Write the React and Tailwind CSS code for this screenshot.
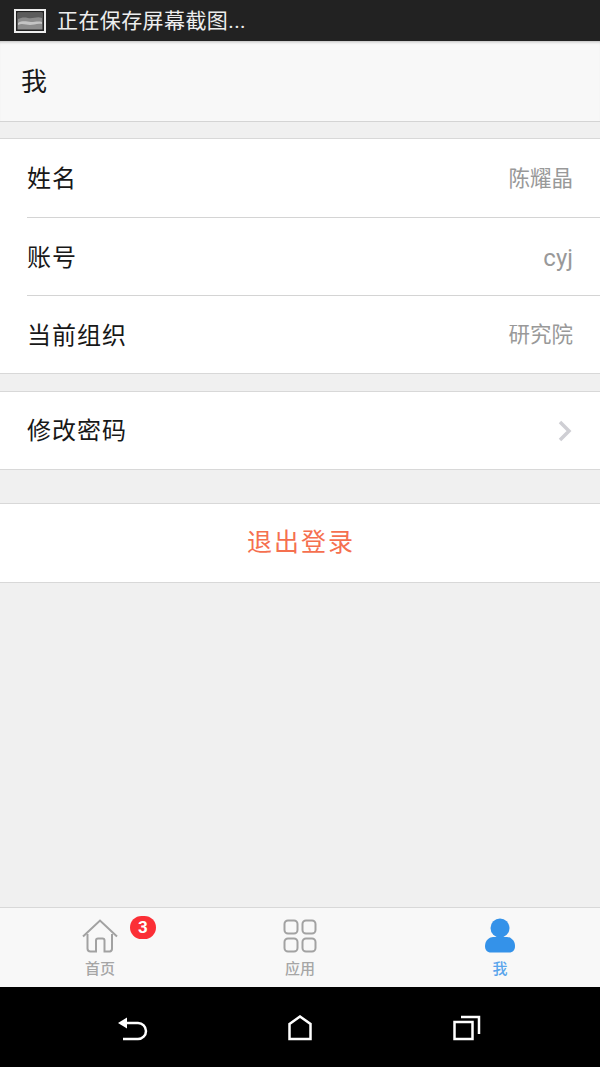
import React from "react";

const font = "font-['Roboto','Noto_Sans_CJK_SC',sans-serif]";

function InfoRow({ label, value, last, height, valueClass = "text-[21.5px] pt-[2px]" }) {
  return (
    <div className="pl-[27px]">
      <div className={`flex items-center justify-between pr-[27px] ${height} ${last ? "" : "border-b border-[#d4d4d4]"}`}>
        <span className="text-[24px] tracking-[1px] text-[#181818] pt-[2px]">{label}</span>
        <span className={`${valueClass} text-[#999999]`}>{value}</span>
      </div>
    </div>
  );
}

function ScreenshotIcon() {
  return (
    <svg width="32" height="24" viewBox="0 0 32 24" className="shrink-0">
      <rect x="1" y="1" width="30" height="22" fill="#222222" stroke="#eeeeee" strokeWidth="2" />
      <rect x="3.500" y="3.500" width="25" height="17" fill="#8c8c8c" />
      <path d="M4 4h24v5c-5-2-9 1-14 0s-7 0-10 1z" fill="#5c5c5c" />
      <path d="M4 14c5-3 9-1 13-1s7-1 11 0v2c-5-1-8 1-12 1s-8-2-12 0z" fill="#c4c4c4" />
    </svg>
  );
}

function HomeIcon() {
  return (
    <svg width="36" height="34" viewBox="0 0 36 34" fill="none" stroke="#a2a2a2" strokeWidth="2">
      <path d="M1 17.500 18 1.500l17 16" />
      <path d="M5.500 15v14.500a3 3 0 0 0 3 3h5.500V21.500a2 2 0 0 1 2-2h4.500a2 2 0 0 1 2 2v11h5.500a3 3 0 0 0 2-3V15" />
    </svg>
  );
}

function AppsIcon() {
  return (
    <svg width="34" height="34" viewBox="0 0 34 34" fill="none" stroke="#a2a2a2" strokeWidth="2">
      <rect x="1.500" y="1.500" width="13" height="13" rx="3.500" />
      <rect x="19.500" y="1.500" width="13" height="13" rx="3.500" />
      <rect x="1.500" y="19.500" width="13" height="13" rx="3.500" />
      <rect x="19.500" y="19.500" width="13" height="13" rx="3.500" />
    </svg>
  );
}

function PersonIcon() {
  return (
    <svg width="30" height="35" viewBox="0 0 30 35" fill="#3492e9">
      <circle cx="15" cy="10" r="9.500" />
      <path d="M0 28c0-6 5-9 8-9h14c3 0 8 3 8 9 0 4-2 6.500-6 6.500H6c-4 0-6-2.500-6-6.500z" />
    </svg>
  );
}

function Tab({ icon, label, active, children }) {
  return (
    <div className="relative flex-1 flex flex-col items-center pt-[10px]">
      <div className="h-[35px] flex items-center justify-center">{icon}</div>
      <span className={`mt-[7px] text-[15px] leading-[18px] font-medium ${active ? "text-[#5aa5ec]" : "text-[#a6a6a6]"}`}>
        {label}
      </span>
      {children}
    </div>
  );
}

export default function App() {
  return (
    <div className={`${font} h-[1067px] w-[600px] flex flex-col bg-[#f0f0f0] overflow-hidden`}>
      {/* status bar */}
      <div className="h-[41px] bg-[#222222] flex items-center pl-[14px] gap-[11px] shrink-0">
        <ScreenshotIcon />
        <span className="text-[21px] text-[#eeeeee] tracking-[0.4px] pt-[2px]">正在保存屏幕截图...</span>
      </div>

      {/* title */}
      <div className="h-[81px] bg-[#f8f8f8] border-b border-[#d4d4d4] flex items-center pl-[21px] pt-[2px] text-[26px] text-[#181818] shrink-0 shadow-[inset_0_3px_3px_-2px_rgba(0,0,0,0.25)]">
        我
      </div>

      <div className="mt-[16px] bg-white border-y border-[#d8d8d8]">
        <InfoRow label="姓名" value="陈耀晶" height="h-[79px]" />
        <InfoRow label="账号" value="cyj" height="h-[78px]" valueClass="text-[24px] pt-[2px]" />
        <InfoRow label="当前组织" value="研究院" height="h-[77px]" last />
      </div>

      <div className="mt-[17px] h-[79px] bg-white border-y border-[#d8d8d8] flex items-center justify-between pl-[27px] pr-[28px]">
        <span className="text-[24px] tracking-[1px] text-[#181818] pt-[1px]">修改密码</span>
        <svg width="14" height="22" viewBox="0 0 14 22" fill="none" stroke="#cfcfd4" strokeWidth="3.500">
          <path d="M2 2l9 9-9 9" />
        </svg>
      </div>

      <div className="mt-[33px] h-[80px] bg-white border-y border-[#d8d8d8] flex items-center justify-center pl-[2px] text-[25px] tracking-[2px] text-[#f5704f]">
        退出登录
      </div>

      <div className="flex-1" />

      {/* tab bar */}
      <div className="h-[80px] bg-[#f8f8f8] border-t border-[#d8d8d8] flex shrink-0">
        <Tab icon={<HomeIcon />} label="首页">
          <span className="absolute left-[130px] top-[8px] w-[26px] h-[23px] rounded-full bg-[#fb2f36] text-white text-[17px] font-bold leading-[23px] text-center">
            3
          </span>
        </Tab>
        <Tab icon={<AppsIcon />} label="应用" />
        <Tab icon={<PersonIcon />} label="我" active />
      </div>

      {/* android nav */}
      <div className="h-[80px] bg-black flex justify-center items-start pt-[28px] shrink-0">
        <div className="w-[167px] flex justify-center">
          <svg width="30" height="26" viewBox="0 0 30 26" fill="none" stroke="#ffffff" strokeWidth="2.500">
            <path d="M4 8h16a7.500 7.500 0 0 1 0 16H5" />
            <path d="M0 8l9-5.500v11z" fill="#ffffff" stroke="none" />
          </svg>
        </div>
        <div className="w-[167px] flex justify-center">
          <svg width="24" height="26" viewBox="0 0 24 26" fill="none" stroke="#ffffff" strokeWidth="2.500">
            <path d="M1.500 9 12 1.500 22.500 9v15h-21z" />
          </svg>
        </div>
        <div className="w-[167px] flex justify-center">
          <svg width="28" height="26" viewBox="0 0 28 26" fill="none" stroke="#ffffff" strokeWidth="2.500">
            <rect x="1.500" y="7" width="18" height="17" />
            <path d="M8 2h18v17" />
          </svg>
        </div>
      </div>
    </div>
  );
}
